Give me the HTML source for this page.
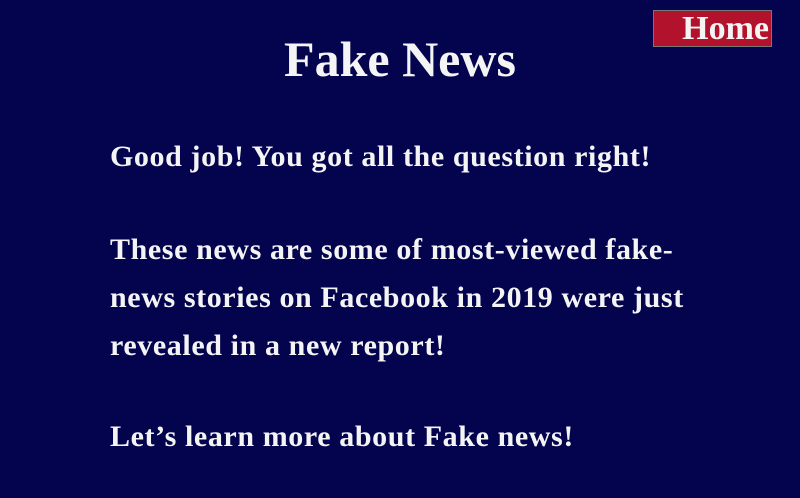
<!DOCTYPE html>
<html><head><meta charset="utf-8"><style>
body{margin:0;width:800px;height:498px;background:#03034e;overflow:hidden;font-family:"Liberation Serif","Noto Serif CJK SC",serif;color:#f4f4f4;font-weight:bold;position:relative}
.home{position:absolute;left:653px;top:10px;width:115px;height:35px;background:#b3122c;border:1px solid #777;font-size:34px;line-height:35px;text-align:right;padding-right:2px;overflow:hidden}
h1{position:absolute;left:0;width:800px;top:31px;margin:0;text-align:center;font-size:50px;line-height:56px}
p{position:absolute;left:110px;margin:0;font-size:30px;line-height:48px;width:680px;letter-spacing:0.6px;white-space:nowrap}
</style></head><body>
<div class="home">Home</div>
<h1>Fake News</h1>
<p style="top:133px">Good job! You got all the question right!</p>
<p style="top:226px">These news are some of most-viewed fake-<br>news stories on Facebook in 2019 were just<br>revealed in a new report!</p>
<p style="top:413px">Let’s learn more about Fake news!</p>
</body></html>
